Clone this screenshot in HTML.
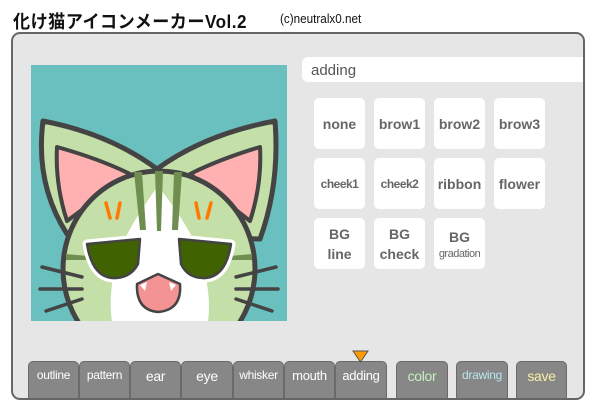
<!DOCTYPE html>
<html><head><meta charset="utf-8"><style>
*{margin:0;padding:0;box-sizing:border-box}
body{width:600px;height:404px;background:#fff;position:relative;overflow:hidden;font-family:"Liberation Sans",sans-serif}
.title{position:absolute;left:13px;top:8px;font-size:18px;font-weight:bold;font-family:"Liberation Sans","Noto Sans CJK JP",sans-serif;color:#111;white-space:nowrap;letter-spacing:0.5px;transform:scaleX(.95);transform-origin:left}
.cr{position:absolute;left:280px;top:11px;font-size:13px;color:#111;transform:scaleX(.9);transform-origin:left}
.panel{position:absolute;left:11px;top:32px;width:574px;height:368px;background:#e6e6e6;border:2px solid #666;border-radius:9px}
.cat{position:absolute;left:30px;top:64px}
.field{position:absolute;left:302px;top:57px;width:281px;height:25px;background:#fff;border-radius:6px 0 0 6px;font-size:15px;color:#555;padding:5px 0 0 9px}
.b{position:absolute;width:51px;height:51px;background:#fff;border-radius:5px;color:#666;font-weight:bold;font-size:14px;display:flex;flex-direction:column;align-items:center;justify-content:center;text-align:center;line-height:20px}
.tab{position:absolute;top:361px;height:37px;background:#878787;border:1px solid #6a6a6a;border-bottom:none;border-radius:5px 5px 0 0;color:#fff;font-size:14px;text-align:center;padding-top:6px;white-space:nowrap;letter-spacing:-0.3px}
.s{display:block;font-size:11px;font-weight:normal;line-height:14px;letter-spacing:-0.5px}
</style></head><body>
<div class="title">化け猫アイコンメーカーVol.2</div>
<div class="cr">(c)neutralx0.net</div>
<div class="panel"></div>
<div class="field">adding</div>
<svg class="cat" width="258" height="258" viewBox="0 0 258 258">
<rect x="1" y="1" width="256" height="256" fill="#6abfbf"/>
<clipPath id="c"><rect x="1" y="1" width="256" height="256"/></clipPath>
<g clip-path="url(#c)">
<path d="M13,57 Q80,70 127,105 Q175,70 245,57 Q250,120 230,175 L37,170 Q5,120 13,57Z" fill="#c5dfa8" stroke="#444" stroke-width="5" stroke-linejoin="round"/>
<path d="M27,83 Q70,95 100,110 L37,157 Q25,120 27,83Z" fill="#ffb0b0" stroke="#444" stroke-width="4" stroke-linejoin="round"/>
<path d="M230,83 Q190,95 160,110 L220,157 Q232,120 230,83Z" fill="#ffb0b0" stroke="#444" stroke-width="4" stroke-linejoin="round"/>
<ellipse cx="129" cy="205" rx="96" ry="98" fill="#c5dfa8" stroke="#444" stroke-width="5"/>
<path d="M128,122 Q100,160 88,190 Q75,240 85,270 L175,270 Q185,240 170,190 Q158,160 128,122Z" fill="#fff"/>
<path d="M104,108 L112,108 L116,166 L110,166Z M125,107 L133,107 L131,167 L127,167Z M144,108 L152,108 L148,166 L142,166Z" fill="#6e8f50"/>
<path d="M36,190 L58,192 L58,196 L36,196Z M222,190 L200,192 L200,196 L222,196Z" fill="#6e8f50"/>
<path d="M76,139 L80,154 M90,139 L87,154 M166,139 L169,154 M181,139 L177,154" stroke="#ff7a00" stroke-width="3.5" stroke-linecap="round"/>
<path d="M57,180 L110,175 L108,200 Q100,215 82,214 Q62,212 57,180Z" fill="#416200" stroke="#fff" stroke-width="9" stroke-linejoin="round"/>
<path d="M57,180 L110,175 L108,200 Q100,215 82,214 Q62,212 57,180Z" fill="#416200" stroke="#444" stroke-width="2.5" stroke-linejoin="round"/>
<path d="M201,180 L149,175 L151,200 Q158,215 176,214 Q196,212 201,180Z" fill="#416200" stroke="#fff" stroke-width="9" stroke-linejoin="round"/>
<path d="M201,180 L149,175 L151,200 Q158,215 176,214 Q196,212 201,180Z" fill="#416200" stroke="#444" stroke-width="2.5" stroke-linejoin="round"/>
<path d="M107,220 L128,210 L150,220 Q152,246 128,248 Q106,246 107,220Z" fill="#f39393" stroke="#444" stroke-width="2.5" stroke-linejoin="round"/>
<path d="M110,221 L117,218 L115,227Z M146,221 L139,218 L141,227Z" fill="#fff"/>
<path d="M12,203 L52,213 M10,225 L52,225 M16,247 L52,235 M246,203 L206,213 M248,225 L206,225 M242,247 L206,235" stroke="#444" stroke-width="3.5" stroke-linecap="round"/>
</g>
</svg>
<div class="b" style="left:314px;top:98px">none</div>
<div class="b" style="left:374px;top:98px">brow1</div>
<div class="b" style="left:434px;top:98px">brow2</div>
<div class="b" style="left:494px;top:98px">brow3</div>
<div class="b" style="left:314px;top:158px;font-size:12px;letter-spacing:-0.5px">cheek1</div>
<div class="b" style="left:374px;top:158px;font-size:12px;letter-spacing:-0.5px">cheek2</div>
<div class="b" style="left:434px;top:158px">ribbon</div>
<div class="b" style="left:494px;top:158px">flower</div>
<div class="b" style="left:314px;top:218px">BG<br>line</div>
<div class="b" style="left:374px;top:218px">BG<br>check</div>
<div class="b" style="left:434px;top:218px"><span>BG</span><span class="s">gradation</span></div>
<div class="tab" style="left:28px;width:51px;font-size:12px">outline</div>
<div class="tab" style="left:79px;width:51px;font-size:12px">pattern</div>
<div class="tab" style="left:130px;width:51px">ear</div>
<div class="tab" style="left:181px;width:52px">eye</div>
<div class="tab" style="left:233px;width:51px;font-size:12px">whisker</div>
<div class="tab" style="left:284px;width:51px;font-size:13px">mouth</div>
<div class="tab" style="left:335px;width:52px;font-size:13px">adding</div>
<div class="tab" style="left:396px;width:52px;color:#c8f0c0">color</div>
<div class="tab" style="left:456px;width:52px;color:#b8e8f0;font-size:12px">drawing</div>
<div class="tab" style="left:516px;width:51px;color:#f8f0a0">save</div>
<svg style="position:absolute;left:352px;top:350px" width="17" height="13"><path d="M1,1 L16,1 L8.5,12Z" fill="#ff9a00" stroke="#555" stroke-width="1"/></svg>
</body></html>
